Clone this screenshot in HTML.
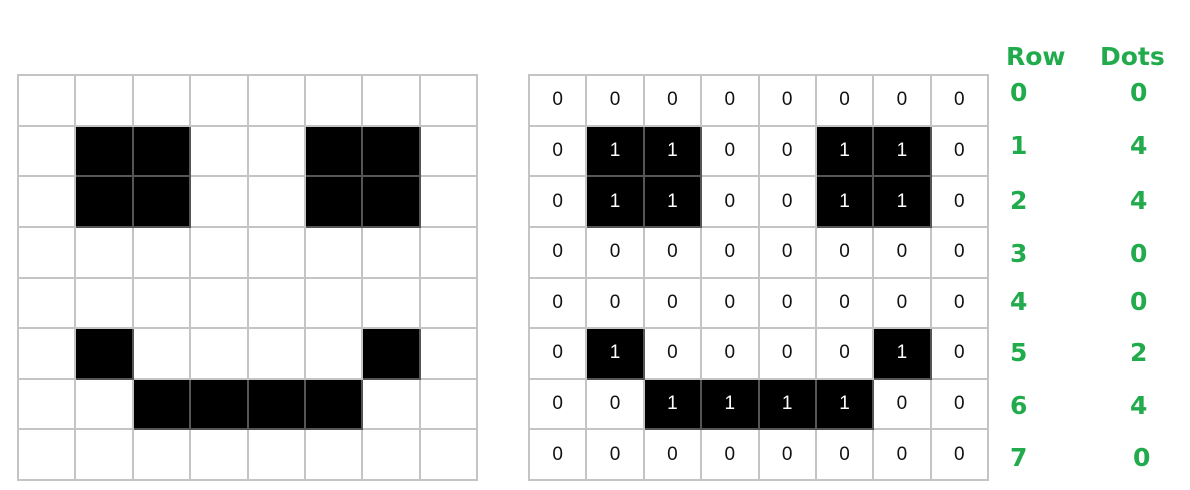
<!DOCTYPE html>
<html><head><style>
body{margin:0;width:1190px;height:490px;background:#fff;position:relative;overflow:hidden;font-family:"Liberation Sans",Arial,sans-serif}
.g{position:absolute;border-collapse:collapse}
.g td{border:2px solid #c4c4c4;width:53px;height:47px;padding:0;text-align:center;font-size:19px;color:#111;font-family:"Liberation Sans",Arial,sans-serif}
.g td.b{background:#000;color:#fff;border-color:#555}
.l{position:absolute;color:#22ab4c;font-weight:bold;font-family:"DejaVu Sans",Verdana,sans-serif;font-size:25px;line-height:1}
</style></head><body>
<table class="g" style="left:17px;top:74px;width:461px;height:407px" id="a"></table>
<table class="g" style="left:528px;top:74px;width:461px;height:407px" id="b"></table>
<div class="l" style="left:1006px;top:44px">Row</div>
<div class="l" style="left:1100px;top:44px">Dots</div>
<div class="l" style="left:1010px;top:80px">0</div><div class="l" style="left:1130px;top:80px">0</div>
<div class="l" style="left:1010px;top:133px">1</div><div class="l" style="left:1130px;top:133px">4</div>
<div class="l" style="left:1010px;top:188px">2</div><div class="l" style="left:1130px;top:188px">4</div>
<div class="l" style="left:1010px;top:241px">3</div><div class="l" style="left:1130px;top:241px">0</div>
<div class="l" style="left:1010px;top:289px">4</div><div class="l" style="left:1130px;top:289px">0</div>
<div class="l" style="left:1010px;top:340px">5</div><div class="l" style="left:1130px;top:340px">2</div>
<div class="l" style="left:1010px;top:393px">6</div><div class="l" style="left:1130px;top:393px">4</div>
<div class="l" style="left:1010px;top:445px">7</div><div class="l" style="left:1133px;top:445px">0</div>
<script>
var m=["00000000","01100110","01100110","00000000","00000000","01000010","00111100","00000000"];
var a="",b="";
for(var r=0;r<8;r++){a+="<tr>";b+="<tr>";for(var c=0;c<8;c++){var k=m[r][c]=="1";a+="<td"+(k?' class="b"':"")+"></td>";b+="<td"+(k?' class="b"':"")+">"+m[r][c]+"</td>";}a+="</tr>";b+="</tr>";}
document.getElementById("a").innerHTML=a;document.getElementById("b").innerHTML=b;
</script>
</body></html>
